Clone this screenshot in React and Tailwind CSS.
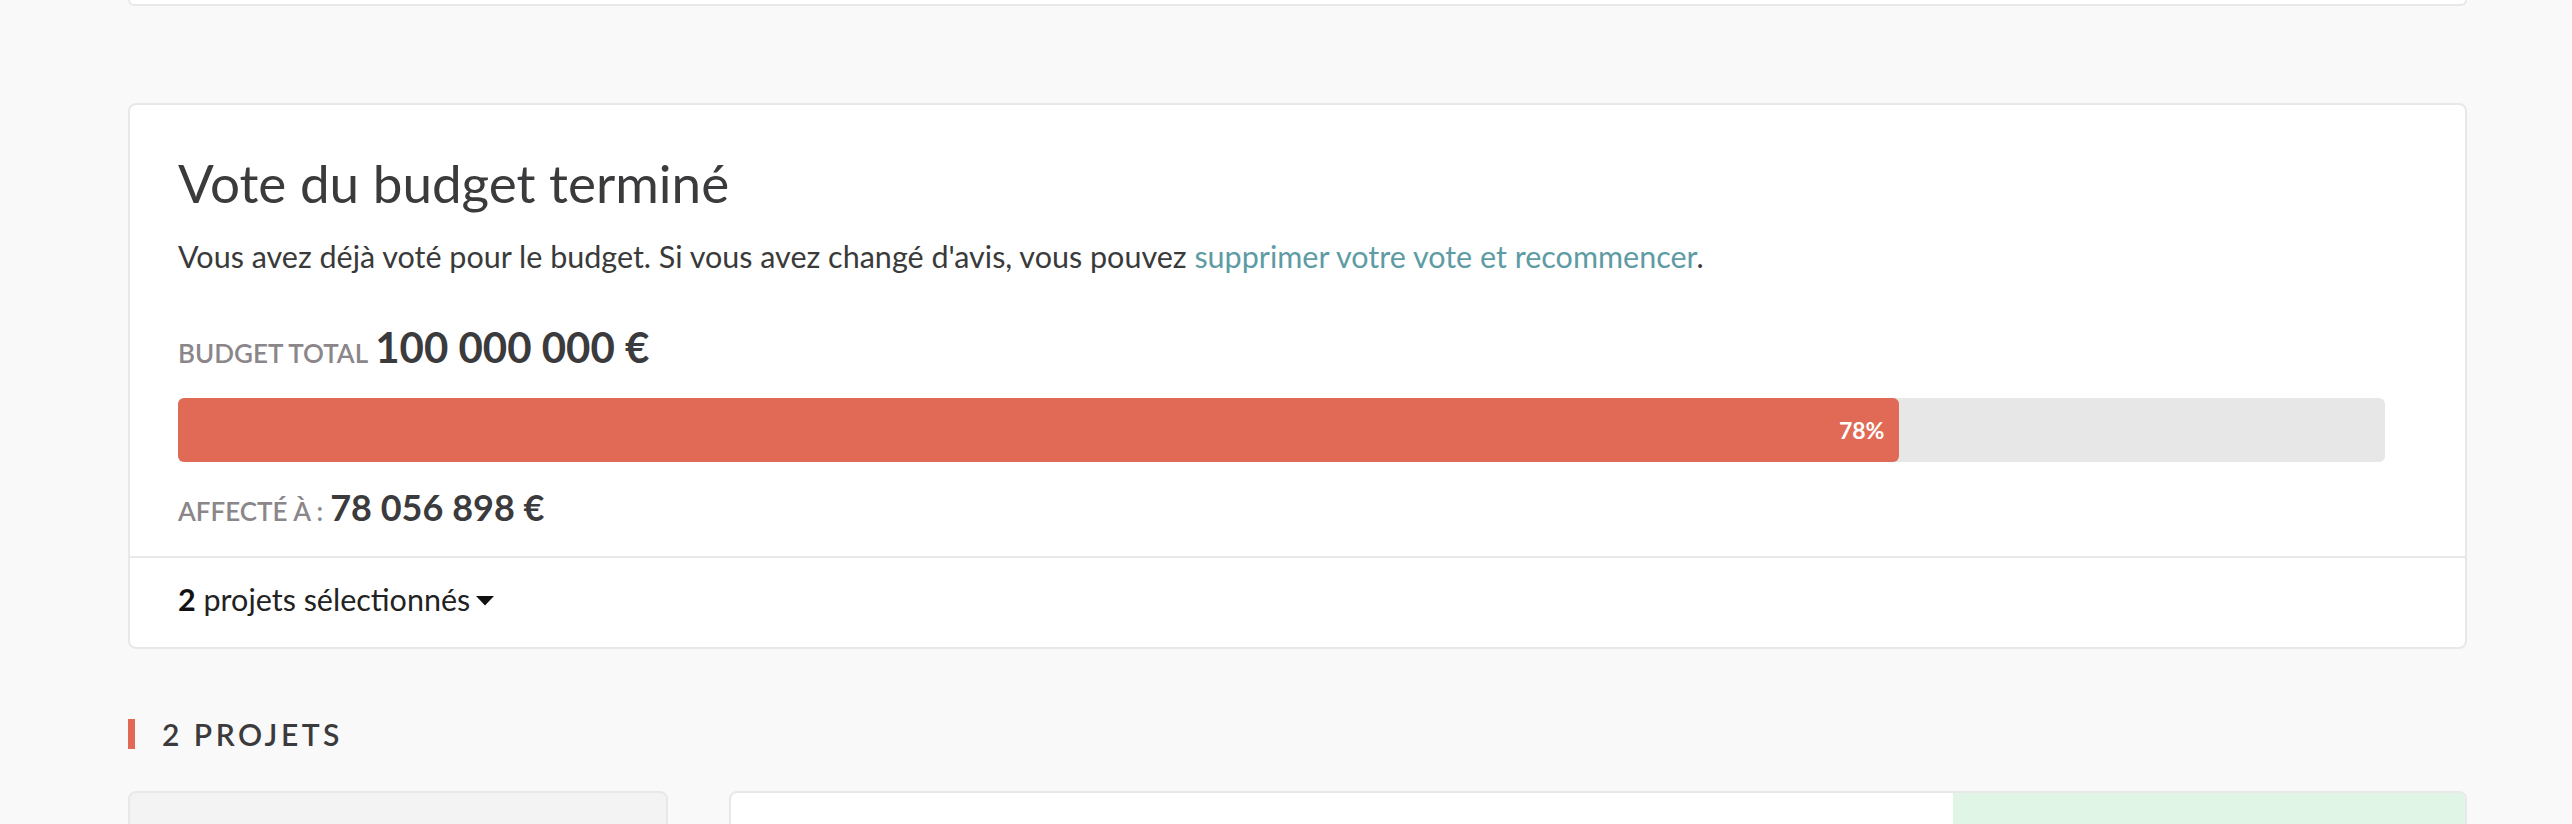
import React from "react";

const budget = {
  total: "100 000 000 €",
  allocated: "78 056 898 €",
  percent: 78,
  selected: 2,
};

function ProgressBar({ percent }) {
  return (
    <div className="h-[64px] rounded-[6px] bg-[#e7e7e7]">
      <div
        className="flex h-full items-center justify-end rounded-[6px] bg-[#e06a56] pr-[15px]"
        style={{ width: `${percent}%` }}
      >
        <span className="text-[23px] font-bold leading-none text-white">
          {percent}%
        </span>
      </div>
    </div>
  );
}

export default function App() {
  return (
    <div className="h-[824px] overflow-hidden bg-[#f9f9f9] pl-[128px] font-['Lato','Noto_Sans',sans-serif] text-[#3b3a3c]">
      <div className="w-[2339px]">
        {/* previous card, only its bottom edge shows */}
        <div className="h-[6px] rounded-b-[6px] border-2 border-t-0 border-[#e8e8e8] bg-white" />

        {/* Budget vote card */}
        <div className="mt-[97px] rounded-[8px] border-2 border-[#e8e8e8] bg-white">
          <div className="pb-[24px] pl-[48px] pr-[80px] pt-[46px]">
            <h2 className="text-[53px] font-normal leading-[64px] text-[#3b3a3c]">
              Vote du budget terminé
            </h2>
            <p className="mt-[20px] text-[30.5px] leading-[42px] text-[#3a3a3a]">
              Vous avez déjà voté pour le budget. Si vous avez changé d'avis,
              vous pouvez{" "}
              <a className="text-[#5e9ba5]">supprimer votre vote et recommencer</a>
              .
            </p>

            <div className="mt-[45px] flex items-baseline gap-[7px] leading-[50px]">
              <span className="text-[26px] font-semibold uppercase text-[#8b868a]">
                Budget total
              </span>
              <span className="text-[42px] font-bold">{budget.total}</span>
            </div>

            <div className="mt-[20px]">
              <ProgressBar percent={budget.percent} />
            </div>

            <div className="mt-[24px] flex items-baseline gap-[7px] leading-[42px]">
              <span className="text-[26px] font-semibold uppercase text-[#8b868a]">
                Affecté à :
              </span>
              <span className="text-[36px] font-bold">{budget.allocated}</span>
            </div>
          </div>

          <div className="border-t-2 border-[#e8e8e8] pb-[27px] pl-[48px] pt-[20px]">
            <button className="flex items-center gap-[6px] text-[30.5px] leading-[42px] text-[#222]">
              <span>
                <b className="font-bold text-[#111]">{budget.selected}</b>{" "}
                projets sélectionnés
              </span>
              <svg width="18" height="10" viewBox="0 0 18 10" className="mt-[4px]">
                <path d="M0 0h18L9 9.5z" fill="#111" />
              </svg>
            </button>
          </div>
        </div>

        {/* Projects heading */}
        <div className="mt-[70px] flex h-[30px] items-center gap-[27px]">
          <div className="h-[30px] w-[7px] bg-[#e06a56]" />
          <h3 className="text-[30px] font-semibold uppercase leading-[36px] tracking-[3.5px] text-[#3b3a3c]">
            2 projets
          </h3>
        </div>

        <div className="mt-[42px] flex gap-[61px]">
          <div className="h-[120px] w-[540px] shrink-0 rounded-[8px] border-2 border-[#e8e8e8] bg-[#f3f3f3]" />
          <div className="flex h-[120px] flex-1 overflow-hidden rounded-[8px] border-2 border-[#e8e8e8] bg-white">
            <div className="flex-1" />
            <div className="w-[512px] bg-[#e1f5e6]" />
          </div>
        </div>
      </div>
    </div>
  );
}
